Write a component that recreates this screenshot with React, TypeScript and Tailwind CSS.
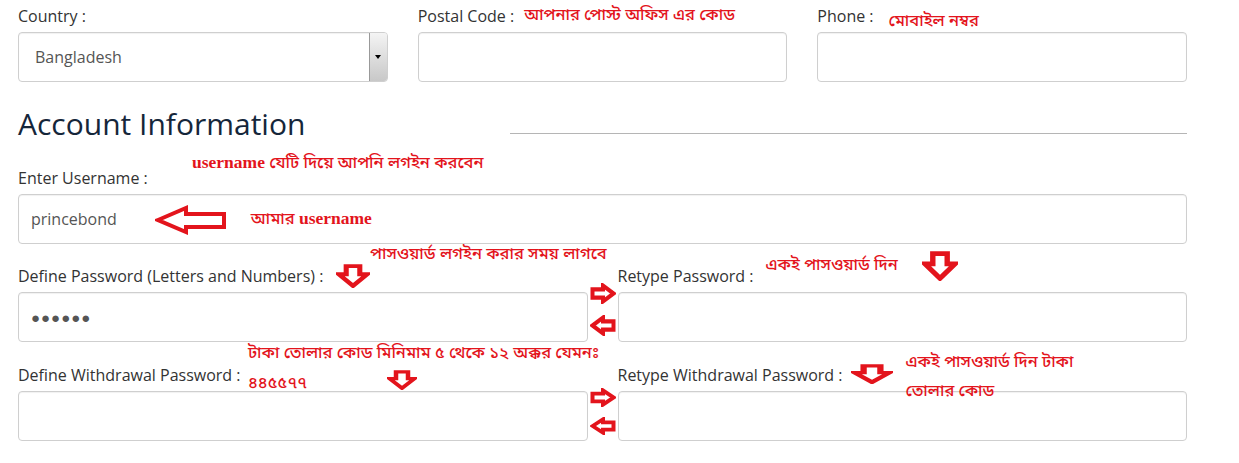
import React from 'react'

const label = 'block h-5 leading-5 text-[16px] text-[#333] whitespace-nowrap'
const box = 'h-[50px] w-full rounded-[4px] border border-[#cfcfcf] bg-white shadow-[inset_0_1px_1px_rgba(0,0,0,0.06)]'
const note = 'relative z-10 whitespace-nowrap text-[16.5px] leading-5 font-medium text-[#e3141c]'
const bn = { fontFamily: '"Noto Sans Bengali", "Noto Sans", sans-serif' }
const serif = { fontFamily: '"Liberation Serif", serif' }

function LeftArrow() {
  return (
    <svg width="72" height="30" viewBox="0 0 72 30">
      <path d="M3 15 L31 3 L31 9 L69 9 L69 22 L31 22 L31 27 Z" fill="#fff" stroke="#e3141c" strokeWidth="4" />
    </svg>
  )
}

// block arrow pointing down, stretched to the box it is given
function DownArrow({ w, h }: { w: number; h: number }) {
  return (
    <svg width={w} height={h} viewBox="0 0 30 28" preserveAspectRatio="none" className="relative z-10 block shrink-0">
      <path d="M9 2.5 L21 2.5 L21 12 L27.5 12 L15 25.5 L2.5 12 L9 12 Z" fill="#fff" stroke="#e3141c" strokeWidth="4.5" />
    </svg>
  )
}

function SideArrow({ dir, h = 20 }: { dir: 'left' | 'right'; h?: number }) {
  return (
    <svg width="26" height={h} viewBox="0 0 26 20" preserveAspectRatio="none" className={dir === 'left' ? 'block -scale-x-100' : 'block'}>
      <path d="M2.5 6 L13 6 L13 2.5 L23.5 10 L13 17.5 L13 14 L2.5 14 Z" fill="#fff" stroke="#e3141c" strokeWidth="4" />
    </svg>
  )
}

function Note({ children, className = '' }: { children: React.ReactNode; className?: string }) {
  return <span className={`${note} ${className}`} style={bn}>{children}</span>
}

export default function App() {
  return (
    <div className="relative w-[1239px] h-[463px] bg-white overflow-hidden" style={{ fontFamily: '"Open Sans", sans-serif' }}>
      <div className="pl-[18px] pt-1.5 w-[1187px]">
        {/* Address row */}
        <div className="grid grid-cols-3 gap-[30px]">
          <div className="flex flex-col gap-1.5">
            <span className={label}>Country :</span>
            <div className={`${box} flex items-center pl-4 relative`}>
              <span className="text-[16px] text-[#555]">Bangladesh</span>
              <div className="absolute right-0 top-0 h-full w-[18px] rounded-r-[3px] border-l border-[#999] bg-gradient-to-b from-[#f4f4f4] to-[#c8c8c8] flex items-center justify-center">
                <span className="block w-0 h-0 border-l-[3px] border-r-[3px] border-t-[4px] border-l-transparent border-r-transparent border-t-black" />
              </div>
            </div>
          </div>
          <div className="flex flex-col gap-1.5">
            <div className="flex items-center h-5 gap-[10px]">
              <span className={label}>Postal Code :</span>
              <Note>আপনার পোস্ট অফিস এর কোড</Note>
            </div>
            <div className={box} />
          </div>
          <div className="flex flex-col gap-1.5">
            <div className="flex items-start h-5 gap-[15px]">
              <span className={label}>Phone :</span>
              <Note className="mt-1.5">মোবাইল নম্বর</Note>
            </div>
            <div className={box} />
          </div>
        </div>

        {/* Heading */}
        <div className="flex items-end mt-[24px] h-[36px]">
          <h2 className="w-[492px] text-[30px] leading-9 text-[#15263a]">Account Information</h2>
          <div className="flex-1 border-t border-[#b5b5b5] mb-[8px]" />
        </div>

        <div className="relative mt-[26px] flex flex-col gap-1.5">
          <Note className="absolute! left-[174px] -top-[16px]">
            <b className="font-bold text-[17.5px]" style={serif}>username</b> যেটি দিয়ে আপনি লগইন করবেন
          </Note>
          <span className={label}>Enter Username :</span>
          <div className={`${box} flex items-center pl-3`}>
            <span className="text-[16px] text-[#555]">princebond</span>
            <span className="ml-[38px] mt-[2px]"><LeftArrow /></span>
            <Note className="ml-[24px]">
              আমার <b className="font-bold text-[17.5px]" style={serif}>username</b>
            </Note>
          </div>
        </div>

        {/* Password row */}
        <div className="grid grid-cols-[1fr_30px_1fr] mt-[22px]">
          <div className="relative flex flex-col gap-1.5">
            <Note className="absolute! left-[352px] -top-[21px]">পাসওয়ার্ড লগইন করার সময় লাগবে</Note>
            <div className="flex items-center h-5 gap-[13px]">
              <span className={label}>Define Password (Letters and Numbers) :</span>
              <DownArrow w={34} h={24} />
            </div>
            <div className={`${box} flex items-center pl-3`}>
              <span className="text-[15px] tracking-[1px] text-[#555]">●●●●●●</span>
            </div>
          </div>
          <div className="flex flex-col items-center pt-[17px] gap-[11px]">
            <SideArrow dir="right" h={21} />
            <SideArrow dir="left" h={21} />
          </div>
          <div className="flex flex-col gap-1.5">
            <div className="flex items-center h-5">
              <span className={label}>Retype Password :</span>
              <div className="flex items-center -translate-y-[10px]">
                <Note className="ml-[12px]">একই পাসওয়ার্ড দিন</Note>
                <span className="ml-[24px]"><DownArrow w={36} h={30} /></span>
              </div>
            </div>
            <div className={box} />
          </div>
        </div>

        {/* Withdrawal row */}
        <div className="grid grid-cols-[1fr_30px_1fr] mt-[23px]">
          <div className="relative flex flex-col gap-1.5">
            <div className="absolute left-[230px] -top-[21px] z-10 flex flex-col gap-[10px]">
              <Note>টাকা তোলার কোড মিনিমাম ৫ থেকে ১২ অক্কর যেমনঃ</Note>
              <div className="flex items-start">
                <Note>৪৪৫৫৭৭</Note>
                <span className="ml-[80px] -mt-[4px]"><DownArrow w={30} h={20} /></span>
              </div>
            </div>
            <span className={label}>Define Withdrawal Password :</span>
            <div className={box} />
          </div>
          <div className="flex flex-col items-center pt-[23px] gap-[10px]">
            <SideArrow dir="right" h={19} />
            <SideArrow dir="left" h={18} />
          </div>
          <div className="flex flex-col gap-1.5">
            <div className="relative z-10 flex items-start h-5">
              <span className={label}>Retype Withdrawal Password :</span>
              <span className="ml-[8px] -mt-[1px]"><DownArrow w={42} h={20} /></span>
              <div className="ml-[13px] -mt-[12px] flex flex-col gap-[9px]">
                <Note>একই পাসওয়ার্ড দিন টাকা</Note>
                <Note>তোলার কোড</Note>
              </div>
            </div>
            <div className={box} />
          </div>
        </div>
      </div>
    </div>
  )
}
